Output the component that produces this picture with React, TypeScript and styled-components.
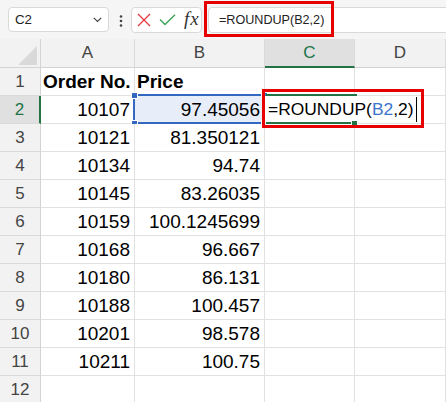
import React from "react";
import styled, { createGlobalStyle, css } from "styled-components";

const Global = createGlobalStyle`
  html, body { margin: 0; padding: 0; background: #fff; overflow: hidden; }
  body { font-family: "Liberation Sans", Arial, sans-serif; }
  * { box-sizing: border-box; }
`;

const GREEN = "#217346";
const BLUE = "#3467c2";
const RED = "#e60000";

const Page = styled.div`
  width: 446px;
  height: 402px;
  overflow: hidden;
  background: #fff;
`;

const Toolbar = styled.div`
  height: 39px;
  background: #f5f5f5;
  display: flex;
  align-items: center;
  padding-left: 8px;
`;

const NameBox = styled.div`
  width: 101px;
  height: 25px;
  background: #fff;
  border: 1px solid #d9d9d9;
  border-radius: 4px;
  display: flex;
  align-items: center;
  justify-content: space-between;
  padding: 0 6px;
  font-size: 13.3px;
  color: #222;
`;

const Dots = styled.svg`
  margin-left: 10px;
  margin-top: 3px;
`;

const ButtonGroup = styled.div`
  margin-left: 8px;
  width: 71px;
  height: 26px;
  background: #fff;
  border: 1px solid #d9d9d9;
  border-radius: 4px;
  display: flex;
  align-items: center;
  padding-left: 5px;
`;

const IconSlot = styled.span<{ $gap?: number }>`
  display: flex;
  align-items: center;
  margin-left: ${(p) => p.$gap ?? 0}px;
`;

const Fx = styled.span`
  margin-left: 8px;
  font-family: "Liberation Serif", "Times New Roman", serif;
  font-style: italic;
  font-size: 19px;
  letter-spacing: 1px;
  color: #333;
  line-height: 1;
  margin-top: -2px;
`;

const FormulaBox = styled.div`
  position: relative;
  margin-left: 6px;
  margin-right: -20px;
  flex: 1;
  height: 26px;
  background: #fff;
  border: 1px solid #d9d9d9;
  border-radius: 4px;
  display: flex;
  align-items: center;
  padding-left: 10px;
  font-size: 12.6px;
  color: #222;
`;

const FormulaHighlight = styled.div`
  position: absolute;
  left: -5px;
  top: -7px;
  width: 130px;
  height: 36px;
  border: 3px solid ${RED};
  pointer-events: none;
`;

const Sheet = styled.div`
  display: grid;
  grid-template-columns: 41px 94px 130px 90px 1fr;
  grid-template-rows: 29px;
  grid-auto-rows: 28px;
`;

const Corner = styled.div`
  background: #f2f2f2;
  border-right: 1px solid #d4d4d4;
  border-bottom: 1px solid #d4d4d4;
  display: flex;
  align-items: flex-end;
  justify-content: flex-end;
  padding: 0 3px 2px 0;
`;

const CornerTriangle = styled.div`
  width: 19px;
  height: 19px;
  background: #d9d9d9;
  clip-path: polygon(100% 0, 100% 100%, 0 100%);
`;

const ColHeader = styled.div<{ $selected?: boolean }>`
  background: #f2f2f2;
  border-right: 1px solid #dadada;
  border-bottom: 1px solid #d4d4d4;
  display: flex;
  align-items: center;
  justify-content: center;
  font-size: 17px;
  color: #444;
  ${(p) =>
    p.$selected &&
    css`
      background: #e0e0e0;
      border-bottom: 2px solid ${GREEN};
      color: ${GREEN};
    `}
`;

const RowHeader = styled.div<{ $selected?: boolean }>`
  background: #f2f2f2;
  border-right: 1px solid #d4d4d4;
  border-bottom: 1px solid #dadada;
  display: flex;
  align-items: center;
  justify-content: center;
  font-size: 17px;
  color: #444;
  ${(p) =>
    p.$selected &&
    css`
      background: #e0e0e0;
      border-right: 2px solid ${GREEN};
      color: ${GREEN};
    `}
`;

const Cell = styled.div<{ $align?: "left" | "right"; $bold?: boolean; $ref?: boolean; $active?: boolean }>`
  position: relative;
  border-right: 1px solid #e1e1e1;
  border-bottom: 1px solid #e1e1e1;
  display: flex;
  align-items: center;
  justify-content: ${(p) => (p.$align === "right" ? "flex-end" : "flex-start")};
  padding: 0 4px 0 2px;
  font-size: 19px;
  font-weight: ${(p) => (p.$bold ? 700 : 400)};
  color: #000;
  white-space: nowrap;
  background: ${(p) => (p.$ref ? "#e8eef9" : "#fff")};
  ${(p) =>
    p.$active &&
    css`
      z-index: 3;
      overflow: visible;
    `}
`;

const RefFrame = styled.div`
  position: absolute;
  left: -2px;
  top: -2px;
  width: 132px;
  height: 30px;
  border: 2px solid ${BLUE};
  pointer-events: none;
`;

const Handle = styled.div<{ $x: number; $y: number; $color: string }>`
  position: absolute;
  left: ${(p) => p.$x}px;
  top: ${(p) => p.$y}px;
  width: 5px;
  height: 5px;
  background: ${(p) => p.$color};
  border: 1px solid #fff;
  box-sizing: content-box;
  margin: -1px 0 0 -1px;
`;

const EditBox = styled.div`
  position: absolute;
  left: 0;
  top: 0;
  width: 158px;
  height: 27px;
  background: #fff;
  display: flex;
  align-items: center;
  padding-left: 3px;
  font-size: 17.4px;
  color: #000;
  white-space: nowrap;
`;

const RefText = styled.span`
  color: #3c74cc;
`;

const Caret = styled.span`
  display: inline-block;
  width: 1px;
  height: 25px;
  background: #000;
  margin-left: 3px;
`;

const GreenLine = styled.div<{ $top: number; $width: number }>`
  position: absolute;
  left: 1px;
  top: ${(p) => p.$top}px;
  width: ${(p) => p.$width}px;
  height: 2px;
  background: ${GREEN};
`;

const CellHighlight = styled.div`
  position: absolute;
  left: -3px;
  top: -7px;
  width: 162px;
  height: 39px;
  border: 3px solid ${RED};
  pointer-events: none;
`;

const data: [string, string][] = [
  ["10107", "97.45056"],
  ["10121", "81.350121"],
  ["10134", "94.74"],
  ["10145", "83.26035"],
  ["10159", "100.1245699"],
  ["10168", "96.667"],
  ["10180", "86.131"],
  ["10188", "100.457"],
  ["10201", "98.578"],
  ["10211", "100.75"],
];

export default function App() {
  return (
    <Page>
      <Global />
      <Toolbar>
        <NameBox>
          <span>C2</span>
          <svg width="9" height="6" viewBox="0 0 9 6">
            <path d="M0.8 0.8 L4.5 4.5 L8.2 0.8" stroke="#444" strokeWidth="1.2" fill="none" />
          </svg>
        </NameBox>
        <Dots width="4" height="12" viewBox="0 0 4 12">
          <circle cx="2" cy="1.5" r="1.3" fill="#444" />
          <circle cx="2" cy="6" r="1.3" fill="#444" />
          <circle cx="2" cy="10.5" r="1.3" fill="#444" />
        </Dots>
        <ButtonGroup>
          <IconSlot>
            <svg width="14" height="14" viewBox="0 0 14 14">
              <path d="M1 1 L13 13 M13 1 L1 13" stroke="#e5393f" strokeWidth="1.3" fill="none" />
            </svg>
          </IconSlot>
          <IconSlot $gap={8}>
            <svg width="17" height="12" viewBox="0 0 17 12">
              <path d="M1 5.5 L6 10.5 L16 0.8" stroke="#3aa152" strokeWidth="1.3" fill="none" />
            </svg>
          </IconSlot>
          <Fx>fx</Fx>
        </ButtonGroup>
        <FormulaBox>
          =ROUNDUP(B2,2)
          <FormulaHighlight />
        </FormulaBox>
      </Toolbar>
      <Sheet>
        <Corner>
          <CornerTriangle />
        </Corner>
        <ColHeader>A</ColHeader>
        <ColHeader>B</ColHeader>
        <ColHeader $selected>C</ColHeader>
        <ColHeader>D</ColHeader>

        <RowHeader>1</RowHeader>
        <Cell $bold>Order No.</Cell>
        <Cell $bold>Price</Cell>
        <Cell />
        <Cell />

        {data.map(([a, b], i) => {
          const row = i + 2;
          const isSel = row === 2;
          return (
            <React.Fragment key={row}>
              <RowHeader $selected={isSel}>{row}</RowHeader>
              <Cell $align="right">{a}</Cell>
              <Cell $align="right" $ref={isSel}>
                {b}
                {isSel && (
                  <>
                    <RefFrame />
                    <Handle $x={-3.5} $y={-3.5} $color={BLUE} />
                    <Handle $x={-3.5} $y={24.5} $color={BLUE} />
                    <Handle $x={126.5} $y={-3.5} $color={BLUE} />
                    <Handle $x={126.5} $y={24.5} $color={BLUE} />
                  </>
                )}
              </Cell>
              {isSel ? (
                <Cell $active>
                  <EditBox>
                    =ROUNDUP(<RefText>B2</RefText>,2)
                    <Caret />
                  </EditBox>
                  <GreenLine $top={-2} $width={91} />
                  <GreenLine $top={26} $width={85} />
                  <Handle $x={87} $y={25} $color={GREEN} />
                  <CellHighlight />
                </Cell>
              ) : (
                <Cell />
              )}
              <Cell />
            </React.Fragment>
          );
        })}

        <RowHeader>12</RowHeader>
        <Cell />
        <Cell />
        <Cell />
        <Cell />
      </Sheet>
    </Page>
  );
}
